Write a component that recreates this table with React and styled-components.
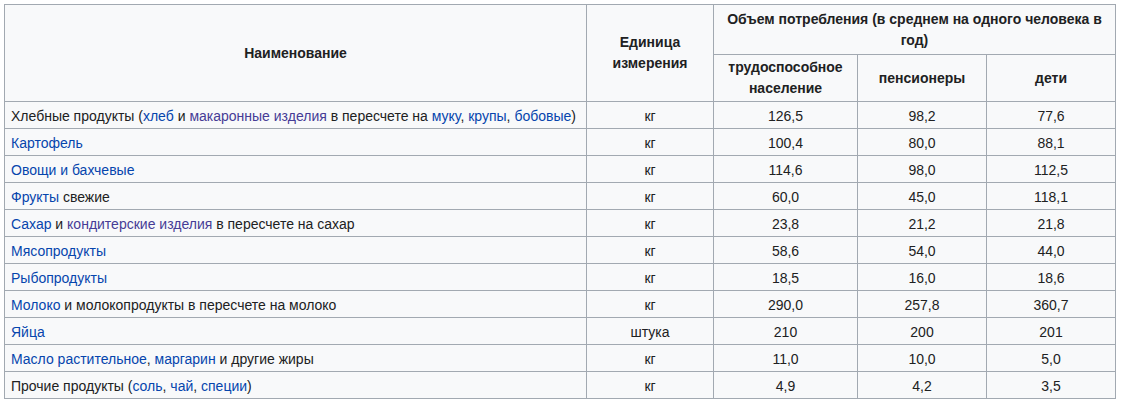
import React from 'react';
import styled, { createGlobalStyle } from 'styled-components';

const GlobalStyle = createGlobalStyle`
  html, body {
    margin: 0;
    padding: 0;
    background: #ffffff;
  }
  body {
    font-family: "Liberation Sans", Arial, sans-serif;
    color: #202122;
  }
`;

const rows = [
  {
    name: [
      'Хлебные продукты (',
      { link: 'хлеб' },
      ' и ',
      { link: 'макаронные изделия', visited: true },
      ' в пересчете на ',
      { link: 'муку' },
      ', ',
      { link: 'крупы' },
      ', ',
      { link: 'бобовые' },
      ')',
    ],
    unit: 'кг',
    values: ['126,5', '98,2', '77,6'],
  },
  { name: [{ link: 'Картофель' }], unit: 'кг', values: ['100,4', '80,0', '88,1'] },
  { name: [{ link: 'Овощи и бахчевые' }], unit: 'кг', values: ['114,6', '98,0', '112,5'] },
  { name: [{ link: 'Фрукты' }, ' свежие'], unit: 'кг', values: ['60,0', '45,0', '118,1'] },
  {
    name: [
      { link: 'Сахар' },
      ' и ',
      { link: 'кондитерские изделия', visited: true },
      ' в пересчете на сахар',
    ],
    unit: 'кг',
    values: ['23,8', '21,2', '21,8'],
  },
  { name: [{ link: 'Мясопродукты' }], unit: 'кг', values: ['58,6', '54,0', '44,0'] },
  { name: [{ link: 'Рыбопродукты' }], unit: 'кг', values: ['18,5', '16,0', '18,6'] },
  {
    name: [{ link: 'Молоко' }, ' и молокопродукты в пересчете на молоко'],
    unit: 'кг',
    values: ['290,0', '257,8', '360,7'],
  },
  { name: [{ link: 'Яйца' }], unit: 'штука', values: ['210', '200', '201'] },
  {
    name: [
      { link: 'Масло растительное' },
      ', ',
      { link: 'маргарин' },
      ' и другие жиры',
    ],
    unit: 'кг',
    values: ['11,0', '10,0', '5,0'],
  },
  {
    name: [
      'Прочие продукты (',
      { link: 'соль' },
      ', ',
      { link: 'чай' },
      ', ',
      { link: 'специи' },
      ')',
    ],
    unit: 'кг',
    values: ['4,9', '4,2', '3,5'],
  },
];

const App = () => {
  return (
    <Page>
      <GlobalStyle />
      <Table>
        <colgroup>
          <col style={{ width: 582 }} />
          <col style={{ width: 127 }} />
          <col style={{ width: 144 }} />
          <col style={{ width: 129 }} />
          <col style={{ width: 129 }} />
        </colgroup>
        <thead>
          <tr>
            <Th rowSpan={2}>Наименование</Th>
            <Th rowSpan={2}>Единица измерения</Th>
            <Th colSpan={3} $height={50}>
              Объем потребления (в среднем на одного человека в год)
            </Th>
          </tr>
          <tr>
            <Th $height={47}>трудоспособное население</Th>
            <Th $height={47}>пенсионеры</Th>
            <Th $height={47}>дети</Th>
          </tr>
        </thead>
        <tbody>
          {rows.map((row, i) => (
            <tr key={i}>
              <NameCell>
                {row.name.map((part, j) =>
                  typeof part === 'string' ? (
                    <React.Fragment key={j}>{part}</React.Fragment>
                  ) : (
                    <WikiLink key={j} href="#" $visited={part.visited}>
                      {part.link}
                    </WikiLink>
                  )
                )}
              </NameCell>
              <Td>{row.unit}</Td>
              {row.values.map((v, j) => (
                <Td key={j}>{v}</Td>
              ))}
            </tr>
          ))}
        </tbody>
      </Table>
    </Page>
  );
};

const Page = styled.div`
  padding: 4px 0 0 4px;
  background: #ffffff;
`;

const Table = styled.table`
  width: 1112px;
  table-layout: fixed;
  border-collapse: collapse;
  background: #f8f9fa;
  color: #202122;
  border: 1px solid #a2a9b1;
  font-size: 14px;
  line-height: 21px;
`;

const Th = styled.th`
  border: 1px solid #a2a9b1;
  background: #f8f9fa;
  padding: 0 6px;
  font-weight: 700;
  text-align: center;
  vertical-align: middle;
  height: ${(p) => (p.$height ? `${p.$height}px` : 'auto')};
  box-sizing: border-box;
`;

const Td = styled.td`
  border: 1px solid #a2a9b1;
  padding: 4px 6px 1px;
  height: 27px;
  box-sizing: border-box;
  text-align: center;
  vertical-align: middle;
`;

const NameCell = styled(Td)`
  text-align: left;
`;

const WikiLink = styled.a`
  color: ${(p) => (p.$visited ? '#463c96' : '#0645ad')};
  text-decoration: none;
`;

export default App;
